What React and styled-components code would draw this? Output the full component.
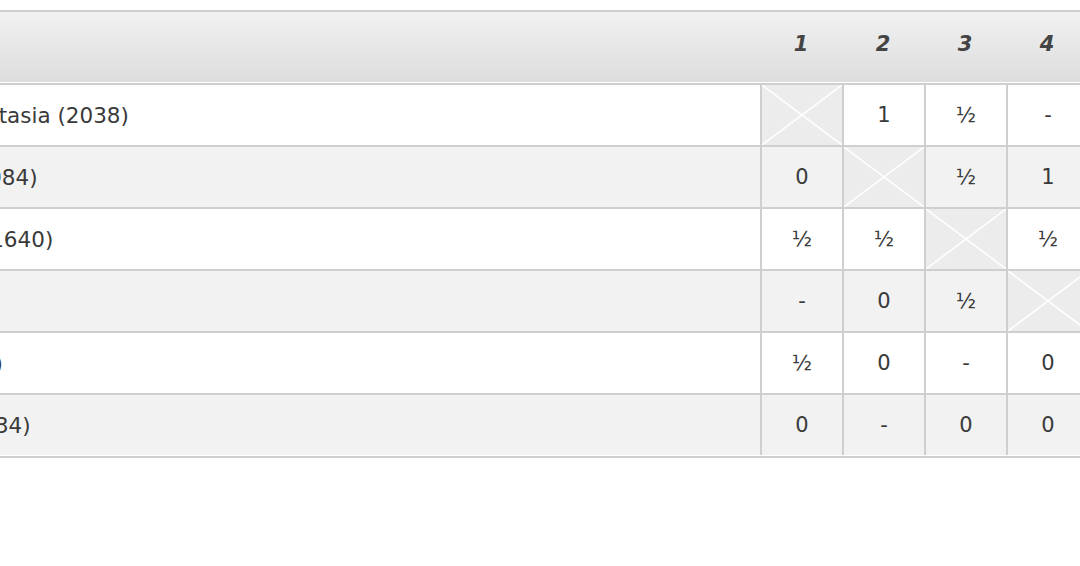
import React from 'react'
import styled, { createGlobalStyle } from 'styled-components';

const GlobalStyle = createGlobalStyle`
  html, body {
    margin: 0;
    padding: 0;
    background: #fff;
    overflow: hidden;
  }
  body {
    font-family: 'DejaVu Sans', 'Liberation Sans', sans-serif;
    color: #3a3a3a;
    -webkit-font-smoothing: antialiased;
  }
`;

// whole cross table, shifted so the name column is cut on the left
const Board = styled.div`
  margin: 10px 0 0 -160px;
  width: 1248px;
  border-bottom: 2px solid #cfcfcf;
`;

// one row of the table: name column + 4 result columns
const Row = styled.div`
  display: grid;
  grid-template-columns: 920px repeat(4, 82px);
  height: ${props => props.head ? '70px' : '60px'};
  border-top: 2px solid #cfcfcf;
  border-bottom: ${props => props.head ? '1px solid #fff' : 'none'};
  background: ${props => props.head
    ? 'linear-gradient(to bottom, #f1f1f1, #dddddd)'
    : props.alt ? '#f2f2f2' : '#fff'};
`;

const Tail = styled.div`
  height: 1px;
  background: #fff;
`;

const NameCell = styled.div`
  display: flex;
  align-items: center;
  padding-left: 11px;
  font-size: 21.5px;
  white-space: nowrap;
`;

const HeadNum = styled.div`
  display: flex;
  align-items: center;
  justify-content: center;
  padding-bottom: 6px;
  font-size: 21px;
  font-weight: bold;
  font-style: italic;
  color: #444;
`;

const Score = styled.div`
  position: relative;
  display: flex;
  align-items: center;
  justify-content: center;
  border-left: 2px solid #cfcfcf;
  font-size: 21px;
  background: ${props => props.self ? '#ececec' : 'transparent'};
`;

const Cross = styled.svg`
  position: absolute;
  inset: 0;
  width: 100%;
  height: 100%;
`;

const players = [
  { name: 'Petrova, Anastasia (2038)', res: ['x', '1', '½', '-'] },
  { name: 'Lima, Rita (1984)', res: ['0', 'x', '½', '1'] },
  { name: 'Novak, Petr (1640)', res: ['½', '½', 'x', '½'] },
  { name: 'Ali, Omar', res: ['-', '0', '½', 'x'] },
  { name: 'Xu, Lin (1500)', res: ['½', '0', '-', '0'] },
  { name: 'Ito, Maria (1734)', res: ['0', '-', '0', '0'] },
];

const App = () => {
  return (
    <>
      <GlobalStyle />
      <Board>
        <Row head>
          <NameCell />
          {[1, 2, 3, 4].map(n => <HeadNum key={n}>{n}</HeadNum>)}
        </Row>

        {players.map((p, i) => (
          <Row key={i} alt={i % 2 === 1}>
            <NameCell>{p.name}</NameCell>
            {p.res.map((r, j) => (
              r === 'x'
                ? (
                  <Score key={j} self>
                    <Cross viewBox="0 0 80 60" preserveAspectRatio="none">
                      <line x1="0" y1="0" x2="80" y2="60" stroke="#fff" strokeWidth="1.5" />
                      <line x1="0" y1="60" x2="80" y2="0" stroke="#fff" strokeWidth="1.5" />
                    </Cross>
                  </Score>
                )
                : <Score key={j}>{r}</Score>
            ))}
          </Row>
        ))}
        <Tail />
      </Board>
    </>
  );
};

export default App;
